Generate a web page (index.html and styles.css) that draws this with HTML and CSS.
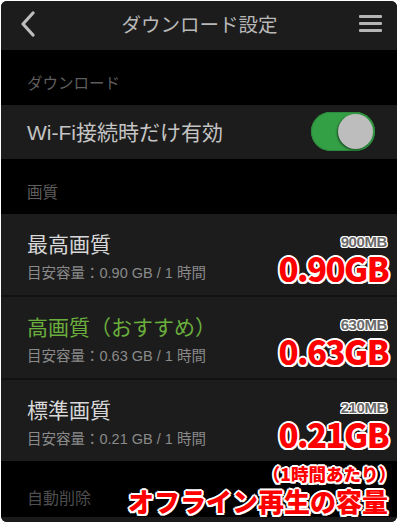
FILE: index.html
```html
<!DOCTYPE html>
<html lang="ja">
<head>
<meta charset="utf-8">
<link rel="stylesheet" href="styles.css">
</head>
<body>
<div class="frame">
  <header class="topbar">
    <svg class="back" width="16" height="26" viewBox="0 0 16 26"><path d="M13 2 L3 13 L13 24" fill="none" stroke="#bdbdbd" stroke-width="3.2" stroke-linecap="round" stroke-linejoin="round"/></svg>
    <div class="title">ダウンロード設定</div>
    <svg class="menu" width="24" height="20" viewBox="0 0 24 20"><rect x="0" y="3" width="23" height="3" rx="1" fill="#b5b5b5"/><rect x="0" y="10" width="23" height="3" rx="1" fill="#b5b5b5"/><rect x="0" y="17" width="23" height="3" rx="1" fill="#b5b5b5"/></svg>
  </header>

  <div class="section">ダウンロード</div>
  <div class="row wifi">
    <span class="wtext">Wi-Fi接続時だけ有効</span>
    <span class="toggle"><span class="knob"></span></span>
  </div>

  <div class="section">画質</div>
  <div class="row quality">
    <div class="qt">最高画質</div>
    <div class="qs">目安容量：0.90 GB / 1 時間</div>
    <div class="note"><span class="mb">900MB</span><span class="gb">0.90GB</span></div>
  </div>
  <div class="row quality">
    <div class="qt green">高画質（おすすめ）</div>
    <div class="qs">目安容量：0.63 GB / 1 時間</div>
    <div class="note"><span class="mb">630MB</span><span class="gb">0.63GB</span></div>
  </div>
  <div class="row quality last">
    <div class="qt">標準画質</div>
    <div class="qs">目安容量：0.21 GB / 1 時間</div>
    <div class="note"><span class="mb">210MB</span><span class="gb">0.21GB</span></div>
  </div>

  <div class="section tail">
    <span>自動削除</span>
    <div class="caption">
      <span class="cap-sm">（1時間あたり）</span>
      <span class="cap-lg">オフライン再生の容量</span>
    </div>
  </div>
  <div class="strip"></div>
</div>
</body>
</html>
```

FILE: styles.css
```css
* { box-sizing: border-box; }
html, body { margin: 0; padding: 0; background: #fff; }
body {
  width: 400px; height: 525px; overflow: hidden;
  font-family: "Liberation Sans", "Noto Sans CJK JP", sans-serif;
}
.frame {
  margin: 1px 3px 0 1px;
  height: 521px;
  background: #000;
  border-radius: 6px;
  overflow: hidden;
  display: flex;
  flex-direction: column;
}
.topbar {
  height: 49px;
  background: #1c1c1c;
  display: flex;
  align-items: center;
  padding: 0 14px 0 19px;
}
.back { display: block; margin-top: -2px; }
.title {
  flex: 1;
  text-align: center;
  color: #b8b8b8;
  font-family: "Noto Sans CJK JP", sans-serif;
  font-size: 19.5px;
  margin-top: -4px;
  margin-left: 4px;
}
.menu { display: block; margin-top: -6px; }

.section {
  height: 55px;
  color: #5e5e5e;
  font-family: "Noto Sans CJK JP", sans-serif;
  font-size: 15.5px;
  padding: 21px 0 0 26px;
  line-height: 22px;
}
.row { background: #1c1c1c; position: relative; }
.wifi {
  height: 55px;
  display: flex;
  align-items: center;
  justify-content: space-between;
  padding: 0 22px 0 26px;
}
.wtext { color: #c4c4c4; font-size: 21px; margin-top: -2px; }
.toggle {
  width: 64px; height: 39px;
  border-radius: 20px;
  background: #33a046;
  position: relative;
  box-shadow: inset 0 0 0 1px #2c8a3c;
}
.knob {
  position: absolute;
  right: 2px; top: 2px;
  width: 35px; height: 35px;
  border-radius: 50%;
  background: #bdbdbd;
  box-shadow: -1px 1px 2px rgba(0,0,0,0.5);
}

.quality {
  height: 83px;
  padding: 14px 0 0 26px;
  border-bottom: 2px solid #111;
}
.quality.last { border-bottom: 0; height: 82px; }
.qt { color: #d8d8d8; font-size: 21px; line-height: 30px; font-family: "Noto Sans CJK JP", sans-serif; }
.qt.green { color: #6aae3c; }
.qs { color: #8a8a8a; font-size: 14.5px; line-height: 18px; margin-top: 6px; }

.note {
  position: absolute;
  right: 8px; top: 20px;
  display: flex;
  flex-direction: column;
  align-items: flex-end;
}
.mb {
  font-family: "Liberation Sans", "Noto Sans", sans-serif;
  font-weight: 700;
  font-size: 15px;
  line-height: 16px;
  color: #6a6a6a;
  letter-spacing: -0.4px;
  margin-right: 2px;
  text-shadow: 1px 0 0 #fff, -1px 0 0 #fff, 0 1px 0 #fff, 0 -1px 0 #fff,
    1px 1px 0 #fff, -1px -1px 0 #fff, 1px -1px 0 #fff, -1px 1px 0 #fff;
}
.gb, .cap-sm, .cap-lg {
  font-family: "Noto Sans CJK JP", sans-serif;
  font-weight: 900;
  color: #ff0000;
  text-shadow: 2px 0 0 #fff, -2px 0 0 #fff, 0 2px 0 #fff, 0 -2px 0 #fff,
    1.5px 1.5px 0 #fff, -1.5px -1.5px 0 #fff, 1.5px -1.5px 0 #fff, -1.5px 1.5px 0 #fff;
}
.gb {
  font-size: 33px;
  line-height: 34px;
  margin-top: 1px;
  letter-spacing: -1.6px;
  margin-right: 1px;
}

.tail {
  position: relative;
  height: 56px;
  padding-top: 25px;
  font-size: 16px;
  color: #4e4e4e;
}
.caption {
  position: absolute;
  right: 9px; top: 3px;
  display: flex;
  flex-direction: column;
  align-items: flex-end;
}
.cap-sm { font-size: 17.5px; line-height: 20px; margin-right: -8px; }
.cap-lg { font-size: 26px; line-height: 34px; }
.strip { height: 5px; background: #1a1a1a; }
```
